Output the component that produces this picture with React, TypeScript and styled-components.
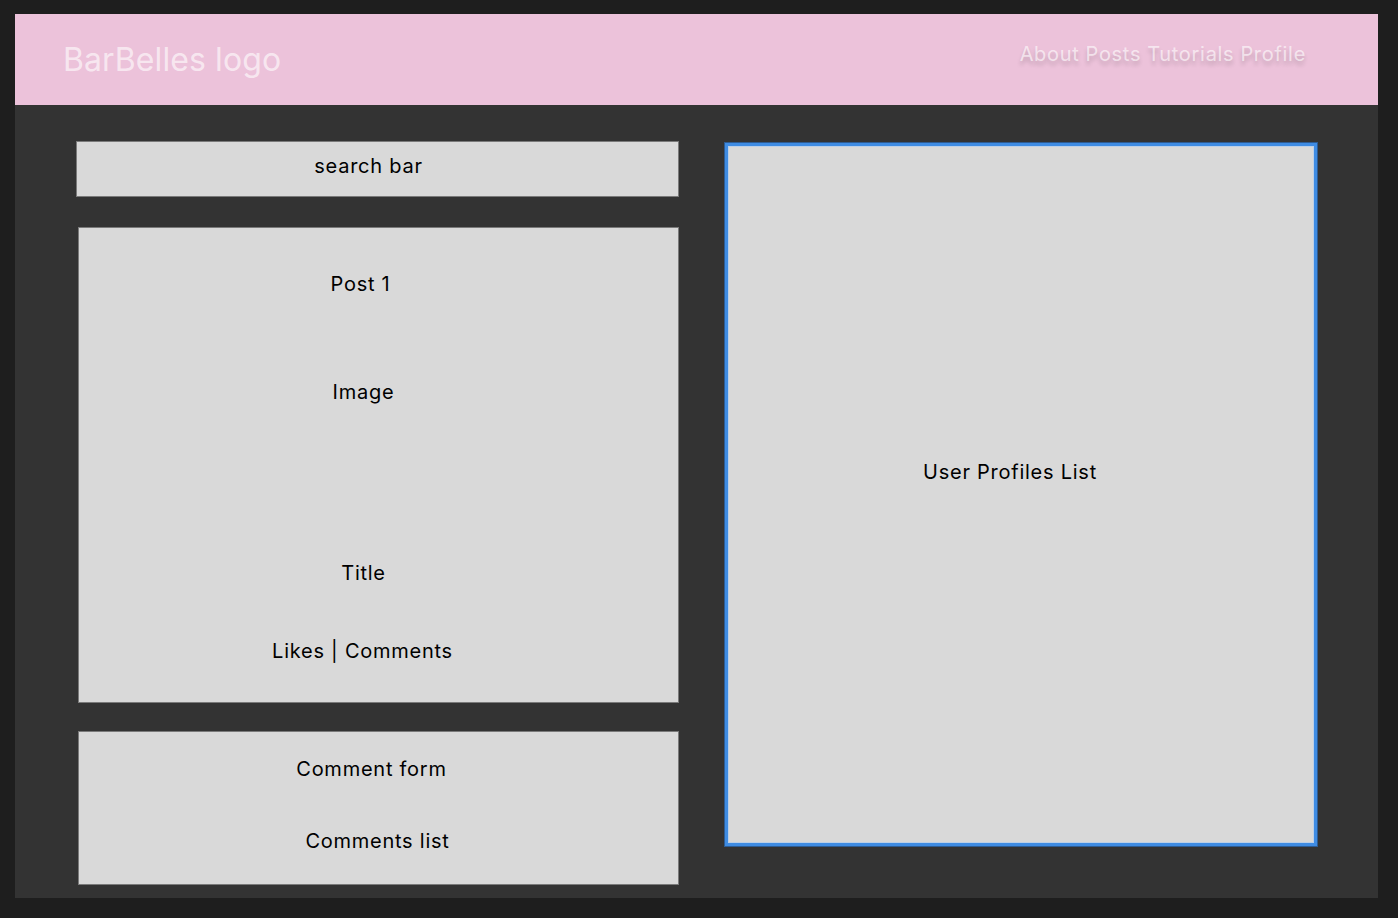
import { FC } from "react";
import styled, { createGlobalStyle } from "styled-components";

const GlobalStyle = createGlobalStyle`
    html, body {
        margin: 0;
        padding: 0;
        background: #1e1e1e;
        font-family: Inter, "Noto Sans", sans-serif;
    }
`;

const Frame = styled.div`
    margin: 14px 0 0 15px;
    width: 1363px;
    height: 884px;
    background: #333333;
    display: flex;
    flex-direction: column;
`;

const Header = styled.header`
    height: 91px;
    background: #ecc2da;
    display: flex;
    align-items: center;
    justify-content: space-between;
    padding: 0 72px 0 48px;
    box-sizing: border-box;
    flex-shrink: 0;
`;

const Logo = styled.div`
    font-size: 32px;
    line-height: 39px;
    color: rgba(255, 255, 255, 0.62);
    letter-spacing: 0.1px;
`;

const Nav = styled.nav`
    display: flex;
    gap: 6px;
    margin-bottom: 12px;
`;

const NavLink = styled.a`
    font-size: 20px;
    line-height: 24px;
    letter-spacing: 0.7px;
    color: rgba(255, 255, 255, 0.62);
    text-shadow: 0 4px 4px rgba(0, 0, 0, 0.18);
    text-decoration: none;
    cursor: pointer;
`;

const Main = styled.main`
    display: grid;
    grid-template-columns: 603px 592px;
    column-gap: 46px;
    align-items: start;
    padding: 36px 0 0 61px;
`;

const LeftColumn = styled.div`
    display: flex;
    flex-direction: column;
`;

const Panel = styled.section<{ $height: number; $indent?: number; $gapTop?: number; $centered?: boolean }>`
    height: ${props => props.$height}px;
    margin-left: ${props => props.$indent ?? 0}px;
    margin-top: ${props => props.$gapTop ?? 0}px;
    background: #d9d9d9;
    border: 1px solid #7a7a7a;
    box-sizing: border-box;
    display: flex;
    flex-direction: column;
    align-items: center;
    justify-content: ${props => (props.$centered ? "center" : "flex-start")};
`;

const Label = styled.div<{ $top?: number; $shift?: number }>`
    font-size: 20px;
    line-height: 24px;
    letter-spacing: 0.75px;
    color: #000000;
    margin-top: ${props => props.$top ?? 0}px;
    transform: translateX(${props => props.$shift ?? 0}px);
    white-space: nowrap;
`;

const ProfilesBox = styled.aside`
    margin-top: 2px;
    height: 703px;
    background: #d9d9d9;
    border: 3px solid #3f8ce3;
    box-sizing: border-box;
    box-shadow: 0 0 0 1px #2d5c94, inset 0 0 0 1px #bcd0e8;
    display: flex;
    align-items: center;
    justify-content: center;
`;

const navItems = ["About", "Posts", "Tutorials", "Profile"];

const App: FC = () => {
    return (
        <>
            <GlobalStyle />
            <Frame>
                <Header>
                    <Logo>BarBelles logo</Logo>
                    <Nav>
                        {navItems.map(item => (
                            <NavLink key={item}>{item}</NavLink>
                        ))}
                    </Nav>
                </Header>
                <Main>
                    <LeftColumn>
                        <Panel $height={56} $centered>
                            <Label $top={-6} $shift={-9}>search bar</Label>
                        </Panel>
                        <Panel $height={476} $indent={2} $gapTop={30}>
                            <Label $top={44} $shift={-18}>Post 1</Label>
                            <Label $top={84} $shift={-15}>Image</Label>
                            <Label $top={157} $shift={-15}>Title</Label>
                            <Label $top={54} $shift={-16}>Likes | Comments</Label>
                        </Panel>
                        <Panel $height={154} $indent={2} $gapTop={28}>
                            <Label $top={25} $shift={-7}>Comment form</Label>
                            <Label $top={48} $shift={-1}>Comments list</Label>
                        </Panel>
                    </LeftColumn>
                    <ProfilesBox>
                        <Label $top={-46} $shift={-11}>User Profiles List</Label>
                    </ProfilesBox>
                </Main>
            </Frame>
        </>
    );
};

export default App;
